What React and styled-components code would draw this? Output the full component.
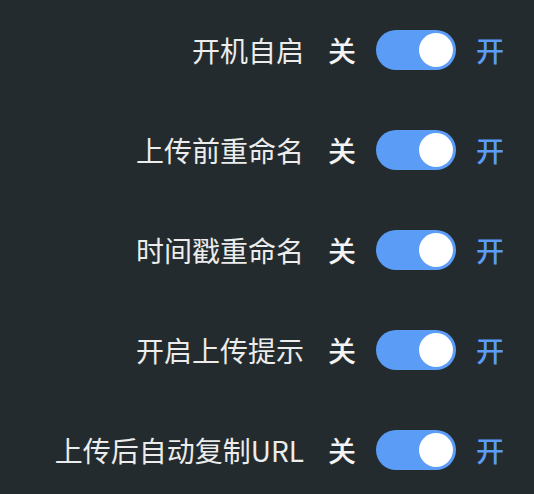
import React, { useState } from 'react';
import styled, { createGlobalStyle } from 'styled-components';

const GlobalStyle = createGlobalStyle`
  html, body {
    margin: 0;
    padding: 0;
    background: #232b2e;
  }
  body {
    font-family: 'Noto Sans CJK SC', 'Noto Sans', sans-serif;
  }
`;

const Form = styled.div`
  width: 534px;
  height: 494px;
  background: #232b2e;
`;

const Row = styled.div`
  display: grid;
  grid-template-columns: 304px auto;
  align-items: center;
  height: 100px;
`;

const Label = styled.div`
  text-align: right;
  font-size: 28px;
  line-height: 40px;
  color: #ececec;
  white-space: nowrap;
`;

const SwitchWrap = styled.div`
  display: flex;
  align-items: center;
  padding-left: 24px;
  cursor: pointer;
`;

const SwitchText = styled.span`
  font-size: 28px;
  font-weight: 500;
  line-height: 40px;
  color: ${p => (p.$active ? '#5a9cf6' : '#f4f4f4')};
`;

const Track = styled.span`
  position: relative;
  box-sizing: border-box;
  width: 80px;
  height: 40px;
  margin: 0 20px;
  border-radius: 20px;
  background: ${p => (p.$on ? '#5a9cf6' : '#dcdfe6')};
`;

const Knob = styled.span`
  position: absolute;
  top: 3px;
  left: ${p => (p.$on ? '43px' : '3px')};
  width: 34px;
  height: 34px;
  border-radius: 50%;
  background: #fff;
  transition: left 0.2s;
`;

const settings = [
  '开机自启',
  '上传前重命名',
  '时间戳重命名',
  '开启上传提示',
  '上传后自动复制URL',
];

function Switch() {
  const [on, setOn] = useState(true);
  return (
    <SwitchWrap onClick={() => setOn(!on)}>
      <SwitchText $active={!on}>关</SwitchText>
      <Track $on={on}>
        <Knob $on={on} />
      </Track>
      <SwitchText $active={on}>开</SwitchText>
    </SwitchWrap>
  );
}

export default function App() {
  return (
    <>
      <GlobalStyle />
      <Form>
        {settings.map(name => (
          <Row key={name}>
            <Label>{name}</Label>
            <Switch />
          </Row>
        ))}
      </Form>
    </>
  );
}
